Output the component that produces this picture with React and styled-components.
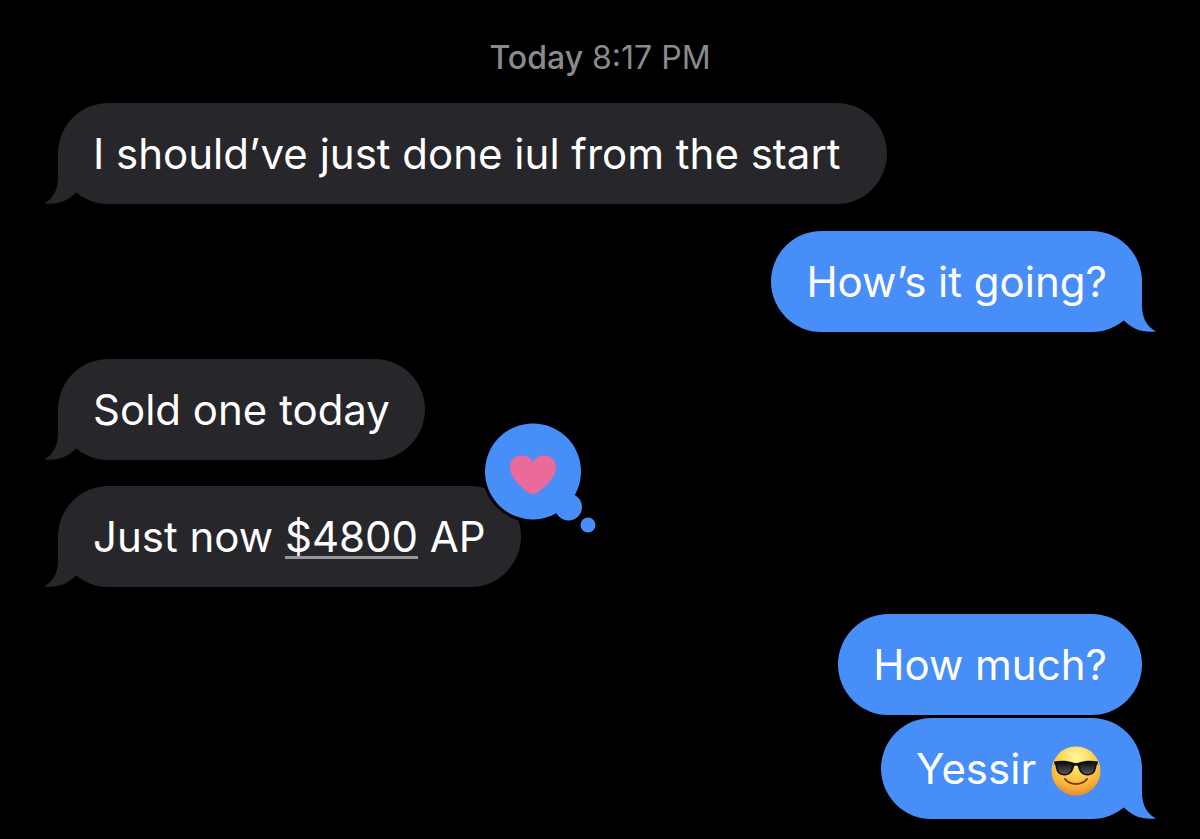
import React from "react";
import styled, { createGlobalStyle, css } from "styled-components";

const conversation = [
  {
    from: "them",
    messages: [
      {
        id: 1,
        text: "I should’ve just done iul from the start",
        tail: true,
        wide: true,
      },
    ],
  },
  {
    from: "me",
    messages: [{ id: 2, text: "How’s it going?", tail: true }],
  },
  {
    from: "them",
    messages: [
      { id: 3, text: "Sold one today", tail: true },
      {
        id: 4,
        text: (
          <>
            Just now <Amount href="#amount">$4800</Amount> AP
          </>
        ),
        tail: true,
        loved: true,
      },
    ],
  },
  {
    from: "me",
    messages: [
      { id: 5, text: "How much?" },
      {
        id: 6,
        text: (
          <>
            Yessir <SunglassesFace />
          </>
        ),
        tail: true,
      },
    ],
  },
];

function Amount({ href, children }) {
  return <AmountLink href={href}>{children}</AmountLink>;
}

function Tail({ from }) {
  return (
    <TailShape $from={from} viewBox="0 0 42 51" aria-hidden="true">
      <path d="M15 0V24C15 37 10 46 1 50.5C14 52 25 48 33 39.5L41 40V0Z" />
    </TailShape>
  );
}

function LoveReaction() {
  return (
    <Reaction viewBox="0 0 120 120" role="img" aria-label="Loved">
      <circle cx="53" cy="52.5" r="51" fill="#000000" />
      <g fill="#478ef8">
        <circle cx="53" cy="52.5" r="48" />
        <circle cx="88.5" cy="88" r="13.5" />
        <circle cx="108" cy="106" r="7.5" />
      </g>
      <path
        fill="#ea6a9a"
        d="M53 75.5C50 75.5 30 62 30 48.5C30 41 35 36.5 42 36.5C47 36.5 51 39 53 43C55 39 59 36.5 64 36.5C71 36.5 76 41 76 48.5C76 62 56 75.5 53 75.5Z"
      />
    </Reaction>
  );
}

function SunglassesFace() {
  return (
    <Emoji viewBox="0 0 50 50" role="img" aria-label="Smiling face with sunglasses">
      <defs>
        <radialGradient id="face" cx="50%" cy="22%" r="78%">
          <stop offset="0" stopColor="#fff7a0" />
          <stop offset="0.4" stopColor="#fdd956" />
          <stop offset="0.75" stopColor="#f9b63b" />
          <stop offset="1" stopColor="#e98a2e" />
        </radialGradient>
        <linearGradient id="lens" x1="0" y1="0" x2="0" y2="1">
          <stop offset="0" stopColor="#141414" />
          <stop offset="1" stopColor="#575757" />
        </linearGradient>
      </defs>
      <circle cx="25" cy="25" r="24.5" fill="url(#face)" />
      <path
        fill="#111111"
        d="M3 15.5C9 14.5 16 14.5 22 16.5Q25 17.5 28 16.5C34 14.5 41 14.5 47 15.5L46.5 18.5L45.5 19.5C45 26 42 29.5 36.5 29.5C31 29.5 28 26 27 20.5Q25 18.5 23 20.5C22 26 19 29.5 13.5 29.5C8 29.5 5 26 4.5 19.5L3.5 18.5Z"
      />
      <path fill="url(#lens)" d="M6 18C10 16.5 17 17 21 19C20.5 25 18 28 13.5 28C9 28 6.5 25 6 18Z" />
      <path fill="url(#lens)" d="M44 18C40 16.5 33 17 29 19C29.5 25 32 28 36.5 28C41 28 43.5 25 44 18Z" />
      <path
        d="M14 33C19 39.5 31 39.5 36 33"
        fill="none"
        stroke="#793d12"
        strokeWidth="2"
        strokeLinecap="round"
      />
    </Emoji>
  );
}

function App() {
  return (
    <>
      <GlobalStyle />
      <Thread>
        <Timestamp>
          <strong>Today</strong> 8:17 PM
        </Timestamp>
        {conversation.map((group) => (
          <Group key={group.messages[0].id} $from={group.from}>
            {group.messages.map((message) => (
              <Bubble key={message.id} $from={group.from} $wide={message.wide}>
                {message.tail && <Tail from={group.from} />}
                <Text>{message.text}</Text>
                {message.loved && <LoveReaction />}
              </Bubble>
            ))}
          </Group>
        ))}
      </Thread>
    </>
  );
}

const GlobalStyle = createGlobalStyle`
  body {
    margin: 0;
    background-color: #000000;
    font-family: Inter, "Liberation Sans", sans-serif;
  }
`;

const Thread = styled.main`
  display: flex;
  flex-direction: column;
  gap: 27px;
  padding: 36px 58px 20px;
`;

const Timestamp = styled.header`
  margin-bottom: -4px;
  text-align: center;
  font-size: 32px;
  line-height: 44px;
  color: #8a8a8e;

  strong {
    font-weight: 500;
  }
`;

const Group = styled.section`
  display: flex;
  flex-direction: column;
  align-items: flex-start;
  gap: 26px;

  ${({ $from }) =>
    $from === "me" &&
    css`
      align-items: flex-end;
      gap: 3px;
    `}
`;

const Bubble = styled.div`
  --bubble: ${({ $from }) => ($from === "me" ? "#478ef8" : "#27262b")};

  position: relative;
  padding: 24px ${({ $wide }) => ($wide ? "46px" : "35px")} 24px 35px;
  border-radius: 51px;
  color: #ffffff;
  background-color: var(--bubble);
`;

const Text = styled.p`
  position: relative;
  margin: 0;
  font-size: 42px;
  line-height: 53px;
  white-space: nowrap;
`;

const TailShape = styled.svg`
  position: absolute;
  bottom: 0;
  left: -15px;
  width: 42px;
  height: 51px;
  fill: var(--bubble);

  ${({ $from }) =>
    $from === "me" &&
    css`
      left: auto;
      right: -15px;
      transform: scaleX(-1);
    `}
`;

const AmountLink = styled.a`
  color: inherit;
  text-decoration: underline;
  text-decoration-color: #98989c;
  text-decoration-thickness: 3px;
  text-decoration-skip-ink: none;
  text-underline-offset: 4px;
`;

const Reaction = styled.svg`
  position: absolute;
  top: -67px;
  right: -79px;
  width: 120px;
  height: 120px;
`;

const Emoji = styled.svg`
  width: 50px;
  height: 50px;
  margin: -8px 6px -4px 3px;
  vertical-align: middle;
`;

export default App;
